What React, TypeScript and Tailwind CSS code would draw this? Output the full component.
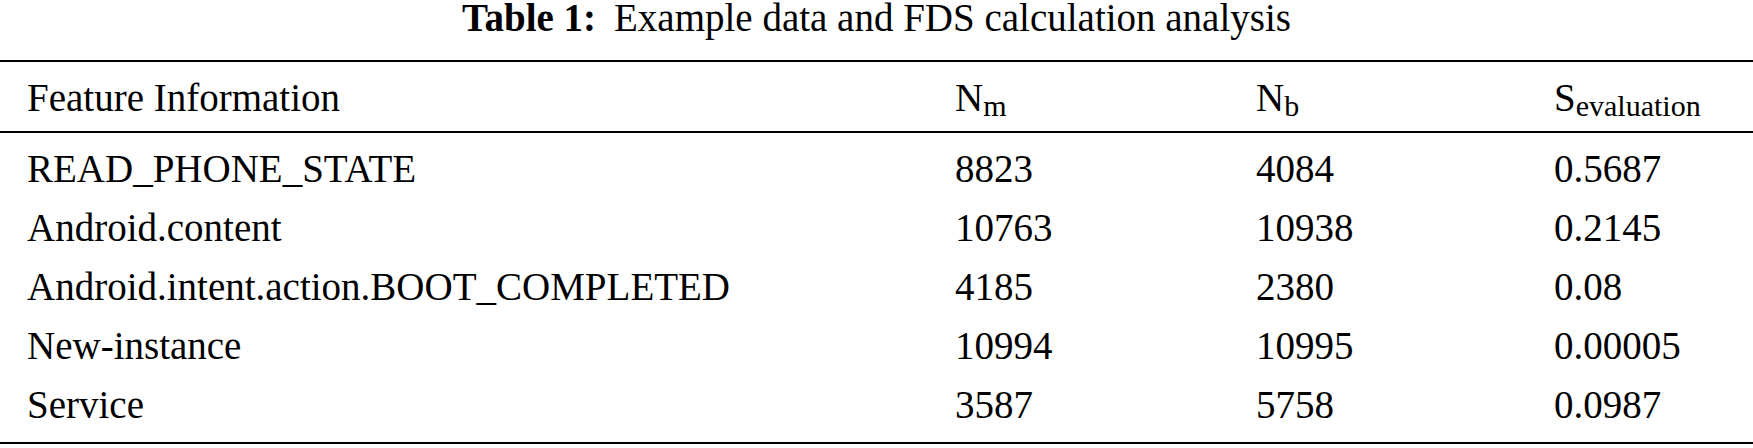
import React from "react";

interface Row {
  feature: string;
  nm: string;
  nb: string;
  score: string;
}

const rows: Row[] = [
  { feature: "READ_PHONE_STATE", nm: "8823", nb: "4084", score: "0.5687" },
  { feature: "Android.content", nm: "10763", nb: "10938", score: "0.2145" },
  {
    feature: "Android.intent.action.BOOT_COMPLETED",
    nm: "4185",
    nb: "2380",
    score: "0.08",
  },
  { feature: "New-instance", nm: "10994", nb: "10995", score: "0.00005" },
  { feature: "Service", nm: "3587", nb: "5758", score: "0.0987" },
];

const cols = "grid grid-cols-[928px_301px_298px_1fr] pl-[27px]";

const Sub: React.FC<{ children: React.ReactNode }> = ({ children }) => (
  <span className="relative top-[5px] text-[30px] leading-none">
    {children}
  </span>
);

const App: React.FC = () => {
  return (
    <div className="w-[1753px] h-[448px] bg-white text-black font-['Liberation_Serif'] text-[39px]">
      {/* caption */}
      <div className="h-[60px] flex justify-center leading-[36px]">
        <p>
          <span className="font-bold">Table 1:</span>
          <span className="ml-[18px]">
            Example data and FDS calculation analysis
          </span>
        </p>
      </div>

      <div className="border-t-2 border-b-2 border-black">
        {/* header */}
        <div
          className={`${cols} pt-[17px] pb-[14px] leading-[38px] border-b-2 border-black`}
        >
          <div>Feature Information</div>
          <div>
            N<Sub>m</Sub>
          </div>
          <div>
            N<Sub>b</Sub>
          </div>
          <div>
            S<Sub>evaluation</Sub>
          </div>
        </div>

        {/* body */}
        <div className="pb-[14px]">
          {rows.map((r) => (
            <div
              key={r.feature}
              className={`${cols} h-[59px] pt-[17px] leading-[38px]`}
            >
              <div>{r.feature}</div>
              <div>{r.nm}</div>
              <div>{r.nb}</div>
              <div>{r.score}</div>
            </div>
          ))}
        </div>
      </div>
    </div>
  );
};

export default App;
